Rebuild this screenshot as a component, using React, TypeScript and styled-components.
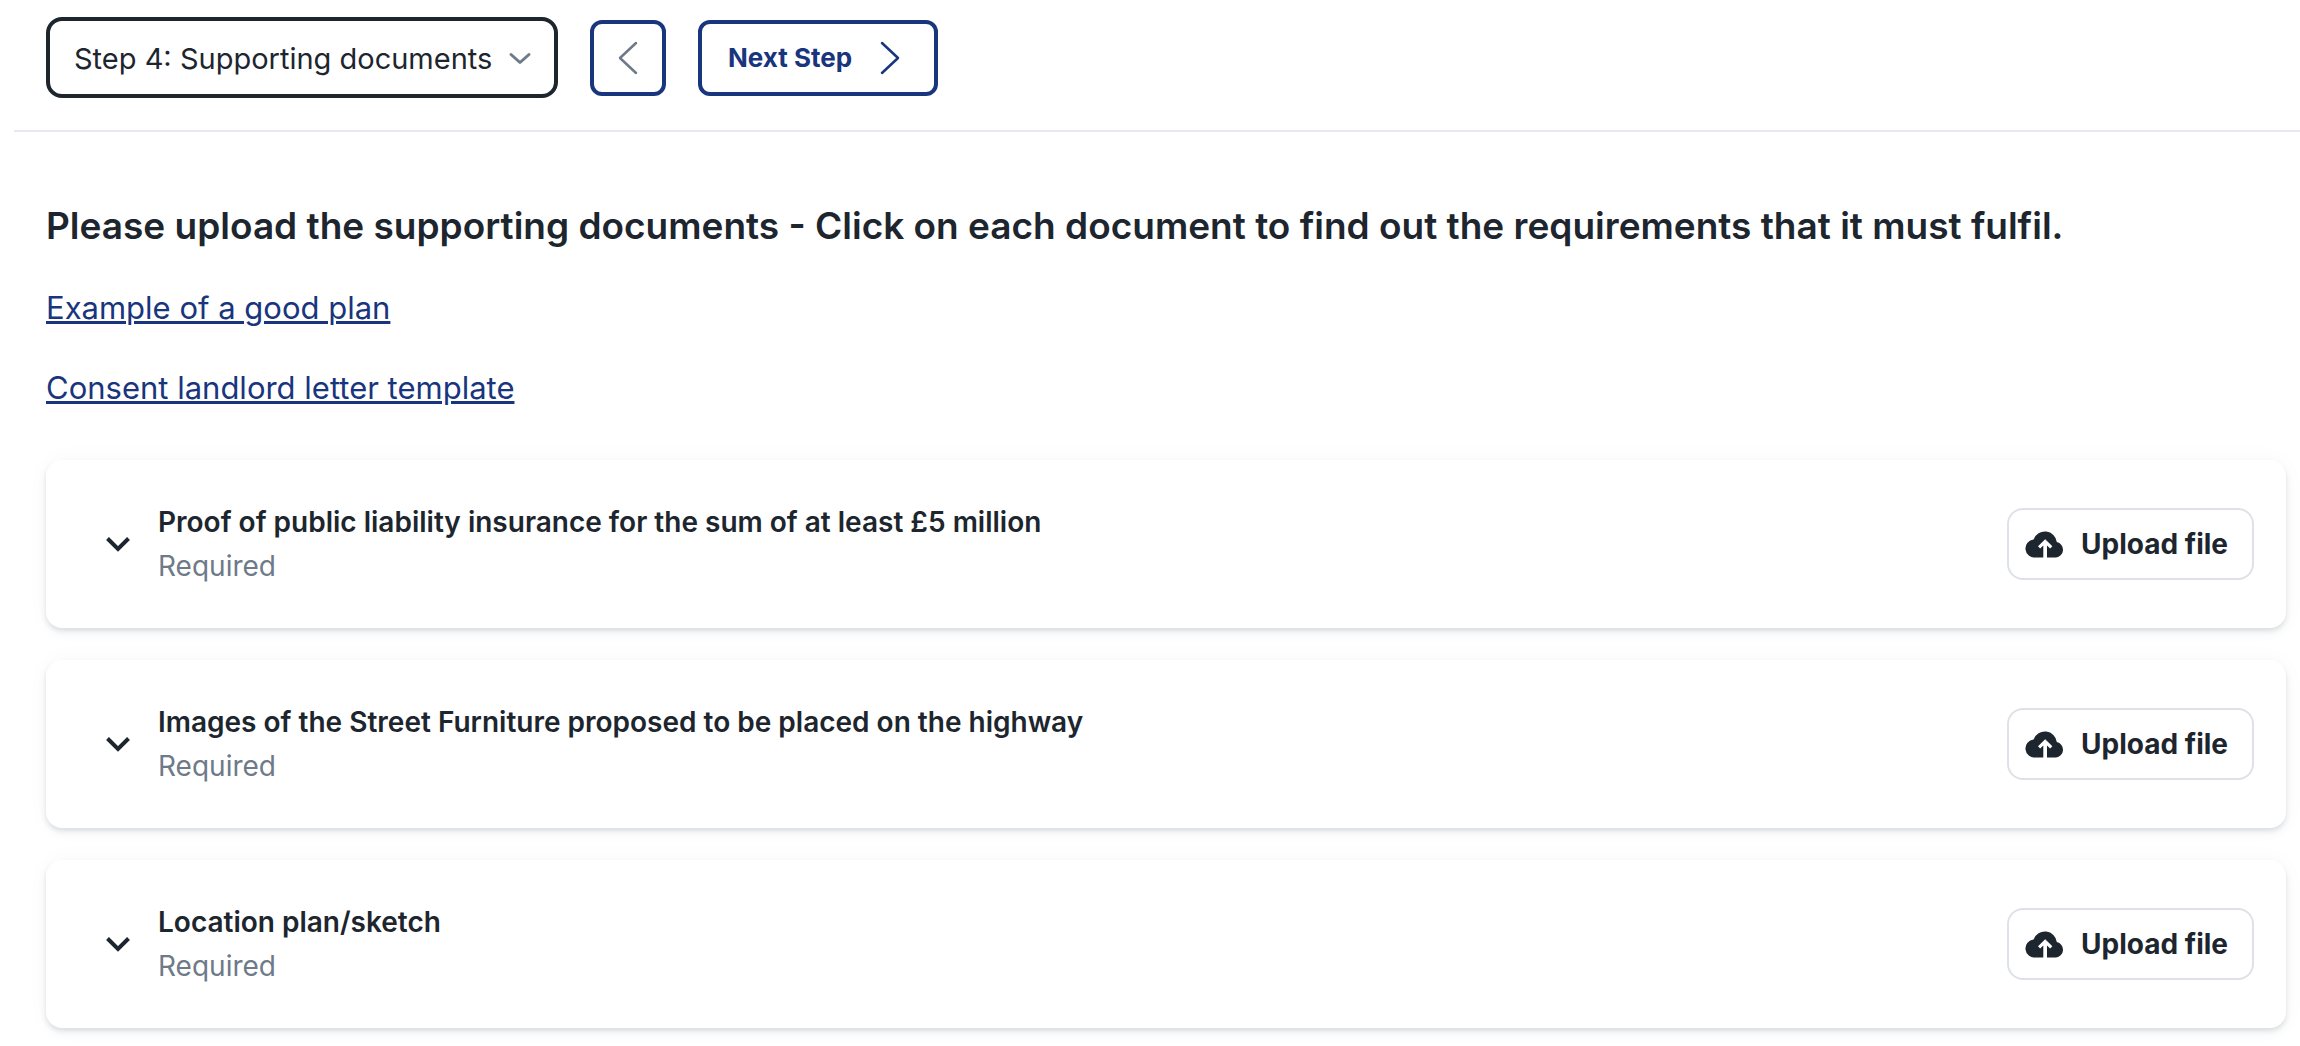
import React, { useState } from "react";
import styled, { createGlobalStyle } from "styled-components";

const ink = "#1d262e";
const navy = "#18357d";
const muted = "#6e7a88";
const line = "#e6eaee";

const GlobalStyle = createGlobalStyle`
  *, *::before, *::after { box-sizing: border-box; }
  body {
    margin: 0;
    background: #fff;
    color: ${ink};
    font-family: Inter, "Liberation Sans", sans-serif;
    font-size: 28px;
    line-height: 44px;
  }
  button, select { font: inherit; color: inherit; }
`;

const Page = styled.div`
  padding-left: 14px;
`;

const Toolbar = styled.header`
  display: flex;
  align-items: center;
  gap: 32px;
  padding: 17px 32px 32px;
  border-bottom: 2px solid ${line};
`;

const StepPicker = styled.div`
  position: relative;
  display: flex;
  width: 512px;
`;

const StepSelect = styled.select`
  appearance: none;
  width: 100%;
  height: 81px;
  padding: 2px 56px 0 24px;
  border: 4px solid ${ink};
  border-radius: 16px;
  background: #fff;
  font-size: 29px;
  line-height: 44px;
  cursor: pointer;
`;

const PickerChevron = styled.svg`
  position: absolute;
  right: 24px;
  top: 50%;
  transform: translateY(-50%);
  width: 28px;
  height: 28px;
  color: ${muted};
  pointer-events: none;
`;

const NavButton = styled.button<{ $iconOnly?: boolean }>`
  display: flex;
  align-items: center;
  justify-content: center;
  gap: 18px;
  height: 76px;
  padding: ${(p) => (p.$iconOnly ? "0 14px" : "0 24px 0 26px")};
  border: 4px solid ${navy};
  border-radius: 12px;
  background: #fff;
  color: ${navy};
  font-size: 26px;
  font-weight: 700;
  cursor: pointer;
`;

const ArrowIcon = styled.svg<{ $dim?: boolean }>`
  width: 40px;
  height: 40px;
  color: ${(p) => (p.$dim ? muted : "inherit")};
`;

const Content = styled.main`
  padding: 72px 14px 18px 32px;
`;

const Heading = styled.h1`
  margin: 0 0 36px;
  font-size: 37px;
  line-height: 44px;
  font-weight: 600;
`;

const LinkLine = styled.p`
  margin: 0 0 32px;
  font-size: 31px;
  line-height: 48px;
`;

const DocLink = styled.a`
  color: ${navy};
  text-decoration: underline;
  text-decoration-thickness: 3px;
`;

const DocumentList = styled.ul`
  display: grid;
  gap: 32px;
  margin: 0;
  padding: 16px 0 0;
  list-style: none;
`;

const DocumentCard = styled.li`
  display: flex;
  align-items: center;
  justify-content: space-between;
  padding: 40px 32px;
  border-radius: 16px;
  background: #fff;
  box-shadow:
    0 0 24px rgba(29, 38, 46, 0.03),
    0 4px 10px rgba(29, 50, 70, 0.05),
    0 3px 4px rgba(29, 50, 70, 0.1);
`;

const Disclosure = styled.button`
  display: flex;
  align-items: center;
  gap: 16px;
  padding: 0 0 0 16px;
  border: 0;
  background: none;
  text-align: left;
  cursor: pointer;
`;

const DisclosureIcon = styled.svg`
  flex: none;
  width: 48px;
  height: 48px;
`;

const Labels = styled.span`
  display: flex;
  flex-direction: column;
`;

const Title = styled.span`
  font-weight: 600;
`;

const Status = styled.span`
  color: ${muted};
`;

const UploadButton = styled.button`
  display: flex;
  align-items: center;
  gap: 16px;
  height: 72px;
  padding: 0 24px 0 16px;
  border: 2px solid #dee2e6;
  border-radius: 16px;
  background: #fff;
  font-weight: 700;
  white-space: nowrap;
  cursor: pointer;
`;

const CloudIcon = styled.svg`
  width: 40px;
  height: 30px;
`;

const steps = ["Step 4: Supporting documents"];

const links = ["Example of a good plan", "Consent landlord letter template"];

const documents = [
  { title: "Proof of public liability insurance for the sum of at least £5 million", status: "Required" },
  { title: "Images of the Street Furniture proposed to be placed on the highway", status: "Required" },
  { title: "Location plan/sketch", status: "Required" },
];

function Document({ title, status }: { title: string; status: string }) {
  return (
    <DocumentCard>
      <Disclosure type="button" aria-expanded={false}>
        <DisclosureIcon viewBox="0 0 48 48" fill="none" aria-hidden="true">
          <path d="M13.500 18.500 24 29 34.500 18.500" stroke="currentColor" strokeWidth="4" strokeLinecap="butt" />
        </DisclosureIcon>
        <Labels>
          <Title>{title}</Title>
          <Status>{status}</Status>
        </Labels>
      </Disclosure>
      <UploadButton type="button">
        <CloudIcon viewBox="0 0 40 30" aria-hidden="true">
          <path
            fill="currentColor"
            d="M18.300 28.500H10.500A8.900 8.900 0 0 1 8.600 10.400 12 12 0 0 1 31.800 13.100 7.800 7.800 0 0 1 31 28.500H22V16.600L25.100 19.500 27.400 17.200 20.200 10.200 13 17.200 15.200 19.500 18.300 16.600Z"
          />
        </CloudIcon>
        Upload file
      </UploadButton>
    </DocumentCard>
  );
}

export default function App() {
  const [step, setStep] = useState(steps[0]);
  return (
    <>
      <GlobalStyle />
      <Page>
        <Toolbar>
          <StepPicker>
            <StepSelect aria-label="Step" value={step} onChange={(e) => setStep(e.target.value)}>
              {steps.map((s) => (
                <option key={s}>{s}</option>
              ))}
            </StepSelect>
            <PickerChevron viewBox="0 0 28 28" fill="none" aria-hidden="true">
              <path d="M5 10.500 14 18.500 23 10.500" stroke="currentColor" strokeWidth="3" strokeLinecap="round" strokeLinejoin="round" />
            </PickerChevron>
          </StepPicker>
          <NavButton type="button" $iconOnly aria-label="Previous step">
            <ArrowIcon $dim viewBox="0 0 40 40" fill="none" aria-hidden="true">
              <path d="M28 5 12 20 28 35" stroke="currentColor" strokeWidth="2.500" strokeLinecap="round" strokeLinejoin="round" />
            </ArrowIcon>
          </NavButton>
          <NavButton type="button">
            Next Step
            <ArrowIcon viewBox="0 0 40 40" fill="none" aria-hidden="true">
              <path d="M12 5 28 20 12 35" stroke="currentColor" strokeWidth="2.500" strokeLinecap="round" strokeLinejoin="round" />
            </ArrowIcon>
          </NavButton>
        </Toolbar>
        <Content>
          <Heading>
            Please upload the supporting documents - Click on each document to find out the requirements that it must fulfil.
          </Heading>
          {links.map((text) => (
            <LinkLine key={text}>
              <DocLink href="#">{text}</DocLink>
            </LinkLine>
          ))}
          <DocumentList>
            {documents.map((d) => (
              <Document key={d.title} {...d} />
            ))}
          </DocumentList>
        </Content>
      </Page>
    </>
  );
}
